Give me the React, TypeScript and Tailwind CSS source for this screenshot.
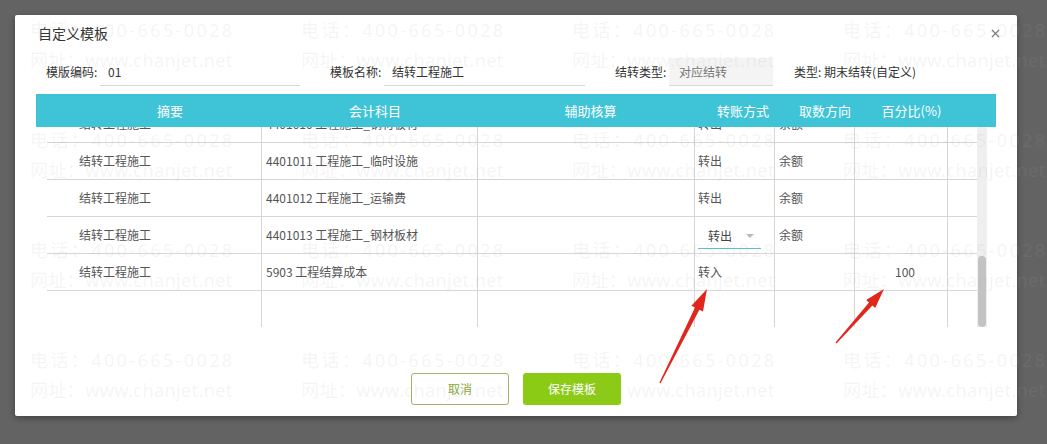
import { X } from "lucide-react";

const rows = [
  { zy: "结转工程施工", km: "4401010 工程施工_钢材板材", fs: "转出", fx: "余额", pct: "" },
  { zy: "结转工程施工", km: "4401011 工程施工_临时设施", fs: "转出", fx: "余额", pct: "" },
  { zy: "结转工程施工", km: "4401012 工程施工_运输费", fs: "转出", fx: "余额", pct: "" },
  { zy: "结转工程施工", km: "4401013 工程施工_钢材板材", fs: "转出", fx: "余额", pct: "", select: true },
  { zy: "结转工程施工", km: "5903 工程结算成本", fs: "转入", fx: "", pct: "100" },
  { zy: "", km: "", fs: "", fx: "", pct: "" },
];

function Watermark() {
  const cells = Array.from({ length: 16 });
  return (
    <div className="pointer-events-none absolute left-[30px] top-[15px] grid grid-cols-[271px_271px_271px_271px] grid-rows-[110px_110px_110px_110px] text-[18px] leading-[30px] text-[rgba(170,170,170,0.13)] font-['Noto_Sans','Noto_Sans_CJK_SC',sans-serif]">
      {cells.map((_, i) => (
        <div key={i} className="whitespace-nowrap">
          <div className="tracking-[2.4px]">电话：400-665-0028</div>
          <div className="tracking-[0.4px]">网址：www.chanjet.net</div>
        </div>
      ))}
    </div>
  );
}

function Arrows() {
  return (
    <svg className="pointer-events-none absolute left-0 top-0" width="1047" height="444">
      <polygon
        fill="#e0271c"
        points="660.6,383.3 699.4,309.8 703.0,311.6 707,289 691.4,305.8 695.0,307.6 659.4,382.7"
      />
      <polygon
        fill="#e0271c"
        points="836.5,343.5 872.4,305.5 875.2,308.0 884,289 866.2,300.0 869.0,302.5 835.5,342.5"
      />
    </svg>
  );
}

function Field({ label, value, width, gray }: { label: string; value: string; width: string; gray?: boolean }) {
  return (
    <div className="flex items-center">
      <span className="text-[12px] text-[#333] w-[54px] whitespace-nowrap">{label}</span>
      <div
        className={`${width} h-[28px] flex items-center pl-[8px] border-b border-[#d8d8d8] text-[12px] ${
          gray ? "bg-[#f4f4f4] text-[#777] pl-[10px]" : "text-[#333]"
        }`}
      >
        {value}
      </div>
    </div>
  );
}

export default function App() {
  return (
    <div className="relative w-[1047px] h-[444px] overflow-hidden bg-[#636363] pt-[15px] pl-[15px] font-['Noto_Sans_CJK_SC','Noto_Sans',sans-serif]">
      <div className="w-[1002px] h-[401px] bg-white rounded-[2px] shadow-[0_2px_6px_rgba(0,0,0,0.35)] flex flex-col">
        {/* title */}
        <div className="h-[36px] flex items-center justify-between pl-[23px] pr-[15px]">
          <span className="text-[14px] text-[#333]">自定义模板</span>
          <X className="w-[13px] h-[13px] text-[#7a7a7a]" strokeWidth={2.2} />
        </div>

        {/* form row */}
        <div className="mt-[7px] pl-[31px] flex items-center h-[28px]">
          <Field label="模版编码:" value="01" width="w-[200px]" />
          <div className="w-[30px]" />
          <Field label="模板名称:" value="结转工程施工" width="w-[201px]" />
          <div className="w-[30px]" />
          <Field label="结转类型:" value="对应结转" width="w-[104px]" gray />
          <span className="ml-[21px] text-[12px] text-[#333]">类型: 期末结转(自定义)</span>
        </div>

        {/* table header */}
        <div className="mt-[8px] ml-[21px] w-[960px] h-[33px] bg-[#3fc4d7] text-white text-[13px] grid grid-cols-[232px_214px_217px_82px_80px_93px_42px] items-center text-center">
          <span className="pl-[36px]">摘要</span>
          <span>会计科目</span>
          <span>辅助核算</span>
          <span className="pl-[6px]">转账方式</span>
          <span className="pl-[8px]">取数方向</span>
          <span className="pl-[8px]">百分比(%)</span>
          <span />
        </div>

        {/* table body */}
        <div className="ml-[32px] w-[940px] h-[200px] overflow-hidden flex">
          <div className="w-[930px]">
            <div className="-mt-[21px]">
              {rows.map((r, i) => (
                <div
                  key={i}
                  className="h-[37px] border-b border-[#d6d6d6] grid grid-cols-[214px_216px_217px_80px_80px_93px_30px] text-[12px] text-[#555]"
                >
                  <div className="flex items-center pl-[32px]">{r.zy}</div>
                  <div className="flex items-center pl-[4px] border-l border-[#d6d6d6]">{r.km}</div>
                  <div className="border-l border-[#d6d6d6]" />
                  <div className="flex items-center pl-[3px] border-l border-[#d6d6d6]">
                    {r.select ? (
                      <div className="relative w-[63px] h-[26px] mt-[2px] flex items-center pl-[10px] border-b border-[#5bc0c8] text-[#444]">
                        转出
                        <span className="ml-[14px] w-0 h-0 border-l-[4px] border-r-[4px] border-t-[4px] border-l-transparent border-r-transparent border-t-[#bbb]" />
                      </div>
                    ) : (
                      r.fs
                    )}
                  </div>
                  <div className="flex items-center pl-[4px] border-l border-[#d6d6d6]">{r.fx}</div>
                  <div className="flex items-center justify-center pl-[8px] border-l border-[#d6d6d6]">{r.pct}</div>
                  <div className="border-l border-[#d6d6d6]" />
                </div>
              ))}
            </div>
          </div>
          {/* scrollbar */}
          <div className="w-[10px] h-[200px] bg-[#efefef] flex flex-col justify-end">
            <div className="h-[71px] mx-[1px] rounded-[4px] bg-[#c3c3c3]" />
          </div>
        </div>

        {/* buttons */}
        <div className="mt-[46px] flex justify-center gap-[14px]">
          <button className="w-[98px] h-[32px] rounded-[3px] border border-[#9fb36b] bg-white text-[12px] text-[#86a83c]">
            取消
          </button>
          <button className="w-[98px] h-[32px] rounded-[3px] bg-[#8bcb16] text-[12px] text-white">保存模板</button>
        </div>
      </div>

      <Watermark />
      <Arrows />
    </div>
  );
}
